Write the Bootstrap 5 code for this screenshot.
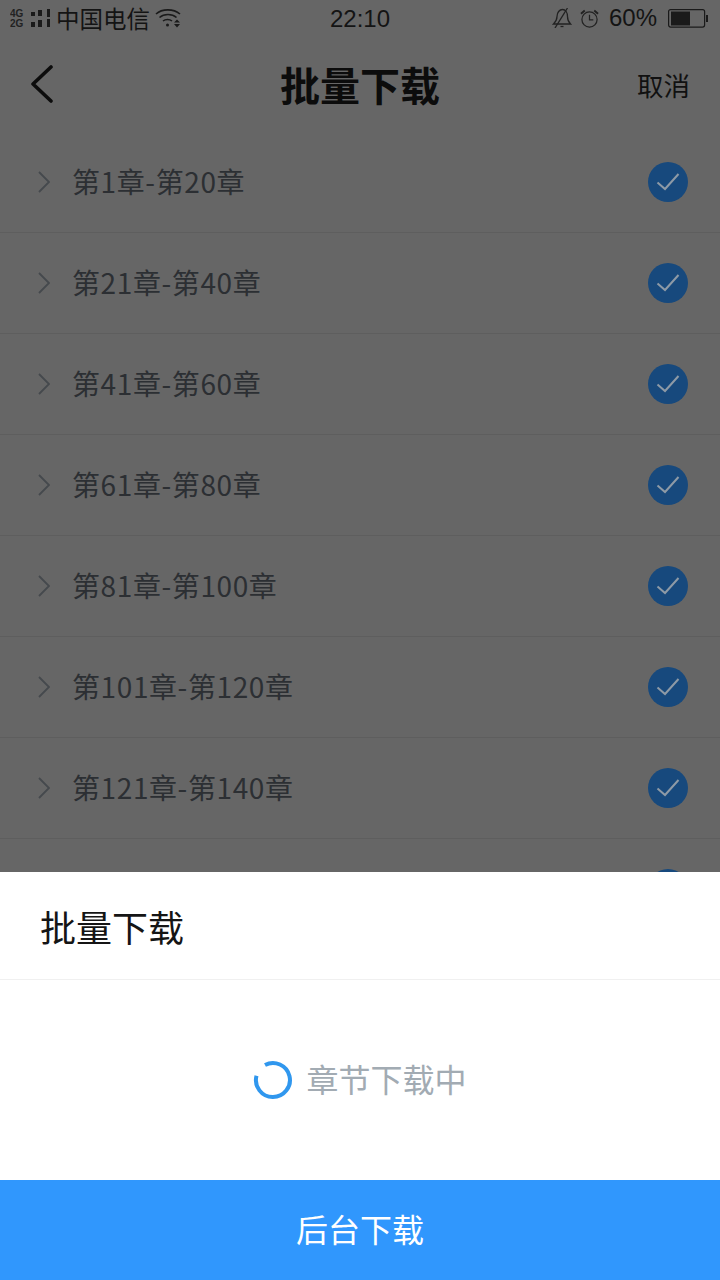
<!DOCTYPE html>
<html lang="zh-CN">

<head>
    <meta charset="UTF-8">
    <meta name="viewport" content="width=device-width, initial-scale=1.0">
    <title>批量下载</title>
    <link href="https://cdn.jsdelivr.net/npm/bootstrap@5.3.3/dist/css/bootstrap.min.css" rel="stylesheet">
    <style>
        html, body { height: 1280px; overflow: hidden; }
        body { background: #666; font-family: "Noto Sans CJK SC", "Liberation Sans", sans-serif; color: #111; }
        .screen { height: 1280px; overflow: hidden; position: relative; }
        .status-bar { height: 36px; padding: 0 12px 0 10px; font-size: 23.5px; color: #141414; }
        .status-time { left: 0; right: 0; top: 0; line-height: 38px; text-align: center; font-size: 24px; color: #141414; font-family: "Liberation Sans", sans-serif; }
        .carrier { margin-left: 5px; margin-right: 5px; padding-top: 1px; }
        .battery-text { font-family: "Liberation Sans", sans-serif; font-size: 24px; margin: 0 11px 0 10px; }
        .top-bar { height: 96px; padding: 0 30px; }
        .top-title { left: 0; right: 0; top: 40px; line-height: 96px; text-align: center; font-size: 40px; font-weight: 700; color: #0c0c0c; font-family: "Liberation Serif", "Noto Sans CJK SC", serif; }
        .top-cancel { font-size: 26.5px; color: #111; padding-top: 2px; }
        .chapter-row { height: 101px; padding: 0 32px 0 38px; border-bottom: 1px solid #5e5e5e; }
        .chapter-name { font-size: 28px; letter-spacing: .6px; color: #2c2f33; margin-left: 22px; padding-bottom: 2px; }
        .check-dot { width: 40px; height: 40px; border-radius: 50%; background: #17497d; }
        .sheet { left: 0; right: 0; bottom: 0; height: 408px; background: #fff; }
        .sheet-title { height: 108px; padding-left: 40px; font-size: 36px; color: #151515; border-bottom: 1px solid #f0f0f0; }
        .sheet-body { height: 200px; gap: 13px; font-size: 32px; color: #a2abb3; }
        .sheet-body span { padding-bottom: 4px; }
        .bg-btn { height: 100px; width: 100%; border: 0; border-radius: 0; padding: 0 0 4px; background: #3097fd; color: #fff; font-size: 32px; }
        .bg-btn:hover { background: #3097fd; color: #fff; }
    </style>
</head>

<body>
    <div class="screen">
        <div class="status-bar d-flex align-items-center">
            <svg width="41" height="20" viewBox="0 0 41 20">
                <text x="0" y="8.500" font-size="10" font-weight="700" font-family="Liberation Sans" fill="#222">4G</text>
                <text x="0" y="18.500" font-size="10" font-weight="700" font-family="Liberation Sans" fill="#222">2G</text>
                <g fill="#1a1a1a">
                    <rect x="21" y="4" width="4" height="4"/><rect x="21" y="14" width="4" height="5"/>
                    <rect x="28" y="2" width="4" height="6"/><rect x="28" y="12" width="4" height="7"/>
                    <rect x="37" y="1" width="3" height="8"/><rect x="37" y="11" width="3" height="8"/>
                </g>
            </svg>
            <span class="carrier">中国电信</span>
            <svg width="26" height="20" viewBox="0 0 26 20" fill="none" stroke="#1a1a1a" stroke-width="1.600">
                <path d="M1 6C7 .5 18.500 .5 25 6"/>
                <path d="M4.500 9.500C9 5.500 17 5.500 21.500 9.500"/>
                <path d="M8 13C10.500 11 14.500 11 17 13"/>
                <circle cx="12.500" cy="17" r="1.500" fill="#1a1a1a" stroke="none"/>
                <path d="M19 14.500h6l-3-3zM19 16h6l-3 3.500z" fill="#1a1a1a" stroke="none"/>
            </svg>
            <div class="ms-auto d-flex align-items-center">
                <svg width="20" height="20" viewBox="0 0 20 20" fill="none" stroke="#222" stroke-width="1.300">
                    <path d="M1.500 16h17c-2-2-3-4-3-7.500 0-4-2-7-5-7s-5.500 3-5.500 7c0 3.500-1.500 5.500-3.500 7.500z"/>
                    <path d="M8.500 18.500h3"/>
                    <path d="M15.500 0 3 20"/>
                </svg>
                <svg class="ms-2" width="19" height="19" viewBox="0 0 20 20" fill="none" stroke="#222" stroke-width="1.300">
                    <circle cx="10" cy="11" r="8"/>
                    <path d="M10 6v5.500h4"/>
                    <path d="M1 5 5 1.500M19 5l-4-3.500" stroke-width="2"/>
                </svg>
                <span class="battery-text">60%</span>
                <svg width="40" height="19" viewBox="0 0 40 19">
                    <rect x=".6" y=".6" width="36" height="17.500" rx="2" fill="none" stroke="#1a1a1a" stroke-width="1.200"/>
                    <rect x="3" y="2.500" width="19" height="14" fill="#1a1a1a"/>
                    <rect x="38" y="6" width="2" height="7" fill="#1a1a1a"/>
                </svg>
            </div>
        </div>
        <div class="status-time position-absolute">22:10</div>

        <div class="top-bar d-flex align-items-center justify-content-between">
            <svg width="24" height="38" viewBox="0 0 24 38" fill="none" stroke="#0c0c0c" stroke-width="3.600" stroke-linecap="round" stroke-linejoin="round">
                <path d="M21 2 3 19l18 17"/>
            </svg>
            <span class="top-cancel">取消</span>
        </div>
        <div class="top-title position-absolute">批量下载</div>

        <div id="chapter-list"></div>

        <div class="sheet position-absolute">
            <div class="sheet-title d-flex align-items-center">批量下载</div>
            <div class="sheet-body d-flex align-items-center justify-content-center">
                <svg width="40" height="40" viewBox="0 0 40 40" fill="none" stroke="#3097ee" stroke-width="4">
                    <path d="M12 5A17 17 0 1 1 3.500 15.700"/>
                </svg>
                <span>章节下载中</span>
            </div>
            <button type="button" class="btn bg-btn">后台下载</button>
        </div>
    </div>

    <template id="chapter-template">
        <div class="chapter-row d-flex align-items-center">
            <svg width="12" height="22" viewBox="0 0 12 22" fill="none" stroke="#45494d" stroke-width="1.800">
                <path d="M1 1l10 10L1 21"/>
            </svg>
            <span class="chapter-name"></span>
            <div class="check-dot ms-auto d-flex align-items-center justify-content-center">
                <svg width="24" height="20" viewBox="0 0 24 20" fill="none" stroke="#8e9aa6" stroke-width="2">
                    <path d="M1.500 10.500 9 17 22.500 2"/>
                </svg>
            </div>
        </div>
    </template>

    <script src="https://cdn.jsdelivr.net/npm/bootstrap@5.3.3/dist/js/bootstrap.bundle.min.js"></script>
    <script>
        // last row sits under the sheet, only its check shows
        const chapters = ['第1章-第20章', '第21章-第40章', '第41章-第60章', '第61章-第80章', '第81章-第100章', '第101章-第120章', '第121章-第140章', ''];
        const list = document.getElementById('chapter-list');
        chapters.forEach(name => {
            const row = document.getElementById('chapter-template').content.cloneNode(true);
            row.querySelector('.chapter-name').innerText = name;
            list.appendChild(row);
        });
    </script>
</body>

</html>
